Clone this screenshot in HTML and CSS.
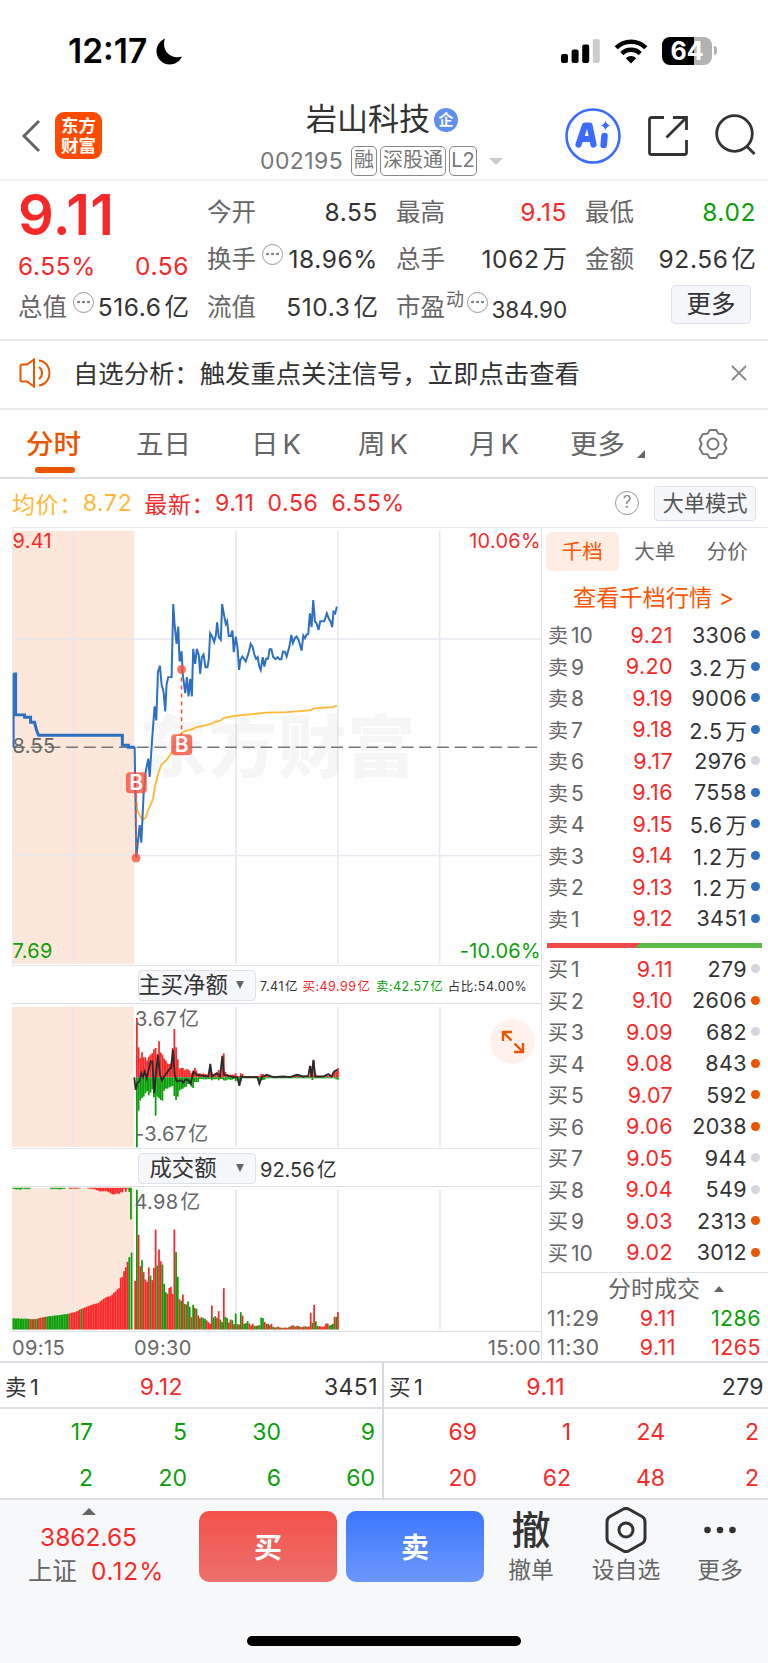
FILE: index.html
```html
<!DOCTYPE html>
<html lang="zh-CN">
  <head>
    <meta charset="UTF-8" />
    <meta name="viewport" content="width=device-width, initial-scale=1.0" />
    <title>岩山科技 002195</title>
    <link rel="stylesheet" href="styles.css">
  </head>
  <body>
    <div class="status-bar">
      <span class="clock">12:17</span>
      <svg class="moon" width="27" height="27" viewBox="0 0 27 27"><path d="M9 0.5C3.800 3 .5 7.500 .5 13.200c0 7.300 5.900 13.200 13.200 13.200 5.500 0 10.200-3.200 12.300-8-1.300.5-3 .8-4.600.8C13.900 19.200 8 13.500 8 6c0-2 .3-3.900 1-5.500z" /></svg>
      <div class="status-icons">
        <svg width="39" height="25" viewBox="0 0 39 25">
          <rect x="0" y="15" width="7" height="9" rx="2" /><rect x="10.600" y="10.500" width="7" height="13.500" rx="2" /><rect x="21.200" y="5.500" width="7" height="18.500" rx="2" /><rect x="31.800" y="0" width="7" height="24" rx="2" fill="#ccc" />
        </svg>
        <svg class="wifi" width="34" height="25" viewBox="0 0 34 25">
          <path d="M2.200 8.800a21 21 0 0 1 29.600 0M7.800 14.600a13 13 0 0 1 18.400 0" fill="none" stroke="#000" stroke-width="4.400" />
          <path d="M17 24.500l-5.200-5.300a7.400 7.400 0 0 1 10.400 0z" />
        </svg>
        <div class="battery">64</div>
      </div>
    </div>

    <div class="header">
      <svg class="back" width="20" height="34" viewBox="0 0 20 34"><path d="M18 2L3 17l15 15" /></svg>
      <div class="logo">东方<br>财富</div>
      <div class="stock">
        <div class="stock-name">岩山科技<span class="corp">企</span></div>
        <div class="stock-code"><span class="code">002195</span><span class="tag">融</span><span class="tag tag-wide">深股通</span><span class="tag tag-l2">L2</span><i class="caret"></i></div>
      </div>
      <div class="header-icons">
        <svg width="56" height="56" viewBox="0 0 56 56">
          <circle cx="28" cy="28" r="26.500" fill="none" stroke="#3b6bff" stroke-width="2.600" />
          <path d="M13.500 36.500L20 17.500h4.500L28.500 36.500M16 31h9.500" fill="none" stroke="#3b6bff" stroke-width="6.200" stroke-linejoin="round" stroke-linecap="round" />
          <path d="M39.500 28l-.8 9" fill="none" stroke="#3b6bff" stroke-width="6.600" stroke-linecap="round" />
          <path d="M40.500 12.500q.9 4.200 5 5-4.100.8-5 5-.9-4.200-5-5 4.100-.8 5-5z" fill="#3b6bff" />
        </svg>
        <svg class="share" width="40" height="40" viewBox="0 0 40 40"><path d="M16 1.500H3.500a2 2 0 0 0-2 2v33a2 2 0 0 0 2 2h33a2 2 0 0 0 2-2V24M25 1.500h13.500V14M38 2L18.500 21.500" /></svg>
        <svg class="search" width="42" height="42" viewBox="0 0 42 42"><circle cx="19.500" cy="19.500" r="17.800" /><path d="M31.500 32l8 8" /></svg>
      </div>
    </div>

    <div class="quote">
      <div class="price">9.11</div>
      <div class="cell r1 c2"><span>今开</span><b>8.55</b></div>
      <div class="cell r1 c3"><span>最高</span><b class="red">9.15</b></div>
      <div class="cell r1 c4"><span>最低</span><b class="green">8.02</b></div>
      <div class="cell r2 change"><b class="red">6.55%</b><b class="red">0.56</b></div>
      <div class="cell r2 c2"><span>换手<i class="dots"></i></span><b>18.96%</b></div>
      <div class="cell r2 c3"><span>总手</span><b>1062<u>万</u></b></div>
      <div class="cell r2 c4"><span>金额</span><b>92.56<u>亿</u></b></div>
      <div class="cell r3"><span>总值<i class="dots"></i></span><b>516.6<u>亿</u></b></div>
      <div class="cell r3 c2"><span>流值</span><b>510.3<u>亿</u></b></div>
      <div class="cell r3 c3 pe"><span>市盈<sup>动</sup><i class="dots"></i></span><b>384.90</b></div>
      <div class="cell r3 c4"><button class="btn-more">更多</button></div>
    </div>

    <div class="notice">
      <svg width="33" height="30" viewBox="0 0 33 30"><path d="M15 1.500v27L8 23.500H3a1.500 1.500 0 0 1-1.500-1.500V8A1.500 1.500 0 0 1 3 6.500h5z" /><path d="M20 9a7.500 7.500 0 0 1 0 12M20 2.500c14 2 14 23 0 25" /></svg>
      <span>自选分析：触发重点关注信号，立即点击查看</span>
      <svg class="close" width="16" height="16" viewBox="0 0 16 16"><path d="M1 1l14 14M15 1L1 15" /></svg>
    </div>

    <div class="tabs">
      <span class="active">分时</span><span>五日</span><span>日<em>K</em></span><span>周<em>K</em></span><span>月<em>K</em></span><span class="tab-more">更多</span>
      <svg width="32" height="32" viewBox="0 0 32 32"><path d="M12.800 2h6.400l2.300 3.700 4.600.2 3.300 5.600-2 4.500 2 4.500-3.300 5.600-4.600.2L19.200 30h-6.400l-2.300-3.700-4.600-.2-3.300-5.600 2-4.500-2-4.500 3.300-5.600 4.600-.2z" /><circle cx="16" cy="16" r="5.500" /></svg>
    </div>

    <div class="summary">
      <span class="yellow">均价：</span><span class="yellow avg">8.72</span>
      <span class="red">最新：</span><span class="red v1">9.11</span><span class="red v2">0.56</span><span class="red">6.55%</span>
      <i class="help">?</i><button>大单模式</button>
    </div>

    <div class="main">
      <div class="charts">
        <svg class="chart" width="530" height="438" viewBox="12 527.200 530 438">
          <rect x="12" y="530" width="122" height="434" fill="#fde6da" />
          <path class="grid" d="M73 530v434M236 530v434M338 530v434M440 530v434M12 638.500h530M12 855.500h530M12.500 528v438" />
          <text class="watermark" x="139" y="772">东方财富</text>
          <path d="M12.500 747H538" stroke="#777" stroke-width="1.500" stroke-dasharray="12 5.700" />
          <text x="12" y="547" class="t-red">9.41</text>
          <text x="541.500" y="547" class="t-red" text-anchor="end">10.06%</text>
          <text x="12" y="753">8.55</text>
          <text x="12" y="958.500" class="t-green">7.69</text>
          <text x="541.500" y="958.500" class="t-green" text-anchor="end">-10.06%</text>
          <g transform="translate(120 580) scale(.33333)">
            <polyline class="avg-line" points="45,610 48,650 51,690 60,710 68,720 76,712 84,688 92,672 98,655 104,620 110,595 116,572 124,553 140,538 150,523 158,512 168,475 184,458 200,451 215,447 230,440 266,433 285,425 302,420 310,413 330,409 362,404 400,401 440,397 500,395 560,391 572,389 582,384 610,382 640,380 651,376" />
            <polyline class="price-line" points="43,500 48,833 58,735 63,788 70,640 76,575 84,535 88,590 96,470 103,378 108,420 113,275 119,256 124,312 130,335 135,393 139,312 144,290 154,290 159,70 163,130 169,190 174,138 178,240 181,240 184,212 188,285 195,338 200,290 205,348 210,295 215,348 219,205 225,250 230,205 236,225 240,280 245,230 250,222 256,260 262,260 266,235 270,158 276,168 282,184 287,165 291,125 296,170 302,178 306,70 312,105 317,130 321,122 326,166 332,166 337,150 341,215 347,168 352,200 357,268 361,238 367,228 377,243 386,215 392,190 398,200 403,222 408,235 413,230 417,255 422,268 428,230 433,258 438,235 444,235 449,206 454,206 459,228 466,236 473,230 478,236 484,236 489,214 495,214 500,228 509,195 514,163 519,188 525,172 530,168 536,178 545,210 550,165 555,173 560,162 565,160 570,98 575,140 580,58 585,122 590,128 596,148 601,122 613,122 621,98 627,115 632,122 637,140 641,93 646,98 651,78" />
          </g>
          <path d="M13 673v74" stroke="#2d6fc0" stroke-width="2" />
          <path class="pre-line" d="M13 673.500h2v41h9v2.500h6v5h4l2 8 2 5h84v10h6v2h6.500" />
          <path class="mark-line" d="M135.700 794v64M181.300 669v66" />
          <circle class="mark" cx="135.700" cy="858" r="4.500" /><circle class="mark" cx="181.300" cy="669" r="4.500" />
          <rect class="mark" x="125.500" y="772" width="21" height="21" rx="4" /><rect class="mark" x="171" y="734" width="21" height="21" rx="4" />
          <text x="136" y="789.500" class="mark-b">B</text><text x="181.500" y="751.500" class="mark-b">B</text>
        </svg>

        <div class="pane-bar">
          <span class="select"><em>主买净额</em><i></i></span>
          <p class="flow-info">7.41<u>亿</u> <span class="red">买:49.99<u>亿</u></span> <span class="green">卖:42.57<u>亿</u></span> 占比:54.00%</p>
        </div>
        <div class="pane">
          <svg width="530" height="144" viewBox="12 1004.200 530 144">
            <rect x="12" y="1007" width="122" height="140" fill="#fde6da" />
            <path class="grid" d="M73 1007v140M236 1007v140M338 1007v140M440 1007v140" />
            <g id="flowBars"></g>
            <text x="135" y="1026.500">3.67<tspan dx="2">亿</tspan></text>
            <text x="135" y="1141">-3.67<tspan dx="2">亿</tspan></text>
            <g transform="translate(0 960) scale(.33333)">
              <polyline class="net-line" points="403,353 407,390 412,370 418,365 424,340 429,352 434,335 440,355 446,330 452,305 457,305 463,400 468,340 474,285 480,345 486,362 492,350 500,340 508,328 513,325 519,270 524,345 530,364 545,362 550,368 558,358 565,362 572,372 580,335 590,345 610,348 625,350 631,312 636,350 650,340 660,350 667,288 672,345 700,352 712,352 718,378 724,350 740,352 772,352 778,372 785,352 800,345 820,352 850,350 870,352 890,345 910,350 925,348 930,318 935,352 940,300 946,350 970,350 985,343 995,350 1003,335 1012,330" />
            </g>
          </svg>
          <div class="expand"><svg width="24" height="24" viewBox="0 0 24 24"><path d="M2 11V2h9M2 2l8.500 8.500M13.500 13.500L22 22M22 13v9h-9" /></svg></div>
        </div>
        <div class="pane-bar">
          <span class="select"><em>成交额</em><i></i></span>
          <p class="vol-info">92.56<u>亿</u></p>
        </div>
        <div class="pane">
          <svg width="530" height="144" viewBox="12 1187.200 530 144">
            <rect x="12" y="1188" width="122" height="142" fill="#fde6da" />
            <path class="grid" d="M73 1190v140M236 1190v140M338 1190v140M440 1190v140" />
            <g id="volBars"></g>
            <text x="134.500" y="1209">4.98<tspan dx="2">亿</tspan></text>
          </svg>
        </div>
        <div class="axis"><span>09:15</span><span class="open">09:30</span><span class="end">15:00</span></div>
      </div>

      <div class="book">
        <div class="book-tabs"><span class="on">千档</span><span>大单</span><span>分价</span></div>
        <div class="book-link">查看千档行情 <span>&gt;</span></div>
        <div id="asks"></div>
        <div class="ratio"><i></i></div>
        <div id="bids"></div>
        <div class="deals">
          <div class="deals-title">分时成交<i></i></div>
          <div class="deal"><span>11:29</span><b class="red">9.11</b><b class="green">1286</b></div>
          <div class="deal"><span>11:30</span><b class="red">9.11</b><b class="red">1265</b></div>
        </div>
      </div>
    </div>

    <div class="queues">
      <div class="queue">
        <div class="queue-head"><span>卖<u>1</u></span><b class="red">9.12</b><b>3451</b></div>
        <div class="queue-body green"><b>17</b><b>5</b><b>30</b><b>9</b><b>2</b><b>20</b><b>6</b><b>60</b></div>
      </div>
      <div class="queue buy">
        <div class="queue-head"><span>买<u>1</u></span><b class="red">9.11</b><b>279</b></div>
        <div class="queue-body red"><b>69</b><b>1</b><b>24</b><b>2</b><b>20</b><b>62</b><b>48</b><b>2</b></div>
      </div>
    </div>

    <div class="footer">
      <div class="index"><i></i><div class="red">3862.65</div><div>上证<span class="red">0.12%</span></div></div>
      <button class="trade trade-buy">买</button>
      <button class="trade trade-sell">卖</button>
      <div class="action"><strong>撤</strong><span>撤单</span></div>
      <div class="action act-fav"><svg width="42" height="46" viewBox="0 0 42 46"><path d="M18 2.300a6 6 0 0 1 6 0l13 7.200a6 6 0 0 1 3 5.200v16.600a6 6 0 0 1-3 5.200l-13 7.200a6 6 0 0 1-6 0L5 36.500a6 6 0 0 1-3-5.200V14.700a6 6 0 0 1 3-5.200z" /><circle cx="21" cy="23" r="7" /></svg><span>设自选</span></div>
      <div class="action act-more"><svg width="34" height="46" viewBox="0 0 34 46"><circle cx="4.500" cy="23" r="3.300" /><circle cx="17" cy="23" r="3.300" /><circle cx="29.500" cy="23" r="3.300" /></svg><span>更多</span></div>
      <div class="home-bar"></div>
    </div>

    <script>
      // dot: b = blue, g = grey, o = orange
      var asks = [
        ["10", "9.21", "3306", "b"], ["9", "9.20", "3.2万", "b"], ["8", "9.19", "9006", "b"],
        ["7", "9.18", "2.5万", "b"], ["6", "9.17", "2976", "g"], ["5", "9.16", "7558", "b"],
        ["4", "9.15", "5.6万", "b"], ["3", "9.14", "1.2万", "b"], ["2", "9.13", "1.2万", "b"],
        ["1", "9.12", "3451", "b"]
      ];
      var bids = [
        ["1", "9.11", "279", "g"], ["2", "9.10", "2606", "o"], ["3", "9.09", "682", "g"],
        ["4", "9.08", "843", "o"], ["5", "9.07", "592", "o"], ["6", "9.06", "2038", "o"],
        ["7", "9.05", "944", "g"], ["8", "9.04", "549", "g"], ["9", "9.03", "2313", "o"],
        ["10", "9.02", "3012", "o"]
      ];

      function renderBook(id, side, rows) {
        document.getElementById(id).innerHTML = rows.map(function (r) {
          return '<div class="level"><span>' + side + "<u>" + r[0] + '</u></span><b class="red">' + r[1] +
            "</b><b>" + r[2].replace("万", "<u>万</u>") + '</b><i class="dot-' + r[3] + '"></i></div>';
        }).join("");
      }
      renderBook("asks", "卖", asks);
      renderBook("bids", "买", bids);

      var RED = "#f92828";
      var GREEN = "#0a9f0a";
      var STEP = 1.704;

      function bar(x, y, h, color) {
        return '<rect x="' + x.toFixed(2) + '" y="' + y.toFixed(2) + '" width="1.75" height="' + h.toFixed(2) + '" fill="' + color + '"/>';
      }

      // volume per minute, negative = down minute
      var vol = [146, -419, 284, 190, -208, 172, 150, 143, 186, -162, 148, 185, 300, -192, 240, 205, -195, -137, -112, 107,
        125, 128, 107, 300, -232, -158, 91, -86, 105, -77, 75, -84, -68, 37, -74, 65, -62, 42, -34, 37,
        -34, -32, 27, 22, 17, 72, -36, -40, 35, 55, -30, -22, 124, -38, -34, 21, 30, -28, 16, -48,
        -16, 15, -52, 42, -17, -19, -25, 18, 12, 17, -11, -11, 12, -13, -36, -34, 23, 17, -17, 13,
        17, -8, 6, -7, 9, 6, -5, 5, 6, 5, -7, 9, 12, -12, 9, 11, -10, 8, 7, 9,
        -10, 8, 9, 50, -20, 74, -25, -11, 10, 9, 8, 10, 18, 18, -12, -14, -17, 38, -38, 52];
      // call auction, matched below and unmatched above
      var pre = [-34, -33, -33, -34, -32, -33, -32, -33, -32, -32, 31, 31, -31, 31, -32, 34, 35, 36, -37, 38,
        -39, -40, -40, -41, -42, -42, -43, -43, -44, -45, -46, -46, -47, 48, 50, 51, 52, 54, 56, 60,
        -62, 64, 66, 68, 70, 72, 74, 76, 77, 78, 80, 84, 88, 92, 95, 98, 99, 101, 104, 110,
        114, 120, 124, 155, 158, 175, 187, 203, -217, -231];
      var unmatched = [-3, -4, -5, -4, -6, -4, -2, -4, -3, -4, -2, 0, 0, 0, 0, 0, 0, 0, 0, 0,
        0, 0, -3, -4, -3, -4, -3, -5, -4, -3, -3, 0, 0, 3, 3, 2, 3, 3, 2, 2,
        0, 0, 0, 0, 2, 3, 3, 4, 5, 7, 9, 11, 10, 11, 10, 11, 13, 16, 19, 20,
        18, 17, 18, 13, 14, 3, 12, 3, -12, -95];

      var html = "";
      vol.forEach(function (v, i) {
        html += bar(134.3 + i * STEP, 1329.7 - Math.abs(v) / 3, Math.abs(v) / 3, v > 0 ? RED : GREEN);
      });
      pre.forEach(function (v, i) {
        html += bar(12.5 + i * STEP + (i > 68 ? 0.6 : 0), 1329.7 - Math.abs(v) / 3, Math.abs(v) / 3, v > 0 ? RED : GREEN);
      });
      unmatched.forEach(function (v, i) {
        html += bar(12.5 + i * STEP, 1188, Math.abs(v) / 3, v > 0 ? RED : GREEN);
      });
      document.getElementById("volBars").innerHTML = html;

      var buys = [0, 178, 90, 58, 75, 60, 60, 50, 62, 68, 72, 84, 88, 70, 108, 74, 68, 56, 50, 42,
        40, 42, 88, 145, 90, 54, 26, 28, 28, 22, 24, 24, 20, 12, 16, 28, 20, 12, 12, 10,
        12, 10, 9, 8, 38, 12, 10, 12, 14, 22, 10, 38, 72, 16, 10, 8, 8, 8, 8, 12];
      var sells = [0, 210, 100, 70, 62, 58, 48, 42, 54, 46, 36, 60, 115, 58, 62, 68, 70, 40, 34, 34,
        30, 28, 26, 56, 68, 58, 40, 36, 34, 30, 28, 20, 20, 28, 32, 14, 14, 14, 5, 5,
        6, 6, 6, 5, 5, 9, 6, 6, 5, 9, 5, 5, 9, 10, 7, 6, 8, 7, 5, 12, 7, 20, 12];
      var lateBuys = { 62: 12, 63: 10, 74: 10, 75: 10, 103: 34, 104: 8, 105: 50, 106: 8, 112: 9, 116: 14, 117: 20, 118: 18, 119: 28 };
      var lateSells = { 73: 20, 74: 9, 75: 8, 76: 7, 104: 8, 118: 6, 119: 7 };
      html = "";
      for (var i = 1; i < 120; i++) {
        var up = (buys[i] || lateBuys[i] || 4) / 3;
        var down = (sells[i] || lateSells[i] || 3) / 3;
        html += bar(134.3 + i * STEP, 1077.5 - up, up, RED) + bar(134.3 + i * STEP, 1077.5, down, GREEN);
      }
      document.getElementById("flowBars").innerHTML = html;
    </script>
  </body>
</html>
```

FILE: styles.css
```css
* {
  margin: 0;
  padding: 0;
  box-sizing: border-box;
}
body {
  width: 768px;
  height: 1663px;
  overflow: hidden;
  background-color: #fff;
  color: #333;
  font-family: Inter, "Noto Sans CJK SC", sans-serif;
  font-size: 23px;
}
b,
i,
em {
  font-weight: 400;
  font-style: normal;
}
u {
  text-decoration: none;
  margin-left: 3px;
  letter-spacing: 0;
}
button {
  border: 1px solid #dfe2e9;
  border-radius: 4px;
  background-color: #f6f7fa;
  font-family: inherit;
  color: #333;
}
.red {
  color: #f92828;
}
.green {
  color: #0a9f0a;
}
.yellow {
  color: #ffb936;
}

/* status bar */
.status-bar {
  display: flex;
  align-items: center;
  height: 102px;
  padding: 0 56px 0 68px;
}
.clock {
  width: 88px;
  font-size: 33.500px;
  font-weight: 600;
  letter-spacing: 0;
  color: #000;
}
.status-icons {
  display: flex;
  align-items: center;
  margin-left: auto;
}
.wifi {
  margin: 0 14px;
}
.battery {
  position: relative;
  width: 50px;
  height: 28px;
  border-radius: 8px;
  background: linear-gradient(to right, #000 64%, #b3b3b3 64%);
  color: #fff;
  font-size: 25px;
  font-weight: 700;
  line-height: 28px;
  text-align: center;
}
.battery::after {
  content: "";
  position: absolute;
  right: -5px;
  top: 9px;
  width: 3px;
  height: 9px;
  border-radius: 0 4px 4px 0;
  background-color: #b3b3b3;
}

/* header */
.header {
  display: flex;
  height: 79px;
  padding-left: 21px;
  border-bottom: 2px solid #f1f1f3;
}
.back {
  margin-top: 17px;
  fill: none;
  stroke: #666;
  stroke-width: 3;
}
.logo {
  width: 47px;
  height: 47px;
  margin: 10px 0 0 14px;
  padding-top: 4px;
  border-radius: 9px;
  background-color: #ff4a00;
  color: #fff;
  font-size: 17.500px;
  font-weight: 700;
  line-height: 20px;
  text-align: center;
}
.stock {
  width: 260px;
  margin-left: 158px;
}
.stock-name {
  display: flex;
  align-items: center;
  height: 37px;
  padding: 0 0 4px 46px;
  font-size: 31px;
  line-height: 30px;
}
.corp {
  width: 24px;
  height: 24px;
  margin: 2px 0 0 4px;
  border-radius: 50%;
  background-color: #5e8eee;
  color: #fff;
  font-size: 15px;
  font-weight: 700;
  line-height: 23px;
  text-align: center;
}
.stock-code {
  display: flex;
  align-items: center;
  height: 30px;
  margin-top: 7px;
  color: #777;
}
.code {
  width: 91px;
  letter-spacing: 0.4px;
}
.tag {
  width: 26px;
  height: 30px;
  margin-right: 3px;
  border: 1.5px solid #888;
  border-radius: 5px;
  font-size: 20px;
  line-height: 27px;
  text-align: center;
}
.tag-wide {
  width: 66px;
}
.tag-l2 {
  width: 28px;
}
.caret {
  margin-left: 9px;
  border: 7px solid transparent;
  border-top-color: #ccc;
  border-bottom: 0;
}
.header-icons {
  display: flex;
  margin: 6px 0 0 45px;
}
.share,
.search {
  fill: none;
  stroke: #333;
  stroke-width: 2.8;
}
.share {
  margin: 8px 0 0 27px;
}
.search {
  margin: 6px 0 0 27px;
}

/* quote */
.quote {
  display: grid;
  grid-template-columns: repeat(4, 169px);
  grid-template-rows: repeat(3, 47px);
  column-gap: 20px;
  height: 160px;
  padding: 8px 0 0 18px;
  border-bottom: 2px solid #ececef;
}
.price {
  color: #f92828;
  font-size: 56px;
  font-weight: 600;
  line-height: 53px;
  letter-spacing: 0.5px;
}
.cell {
  display: flex;
  align-items: center;
  justify-content: space-between;
  font-size: 24.500px;
  line-height: 47px;
  white-space: nowrap;
}
.cell span {
  position: relative;
  color: #666;
}
.cell b {
  margin-right: -2px;
  letter-spacing: 0.6px;
}
.change {
  padding-top: 14px;
}
.r3 {
  padding-top: 1px;
}
.dots {
  position: absolute;
  left: 55px;
  top: 8px;
  width: 21px;
  height: 21px;
  border: 1.5px solid #999;
  border-radius: 50%;
  background: radial-gradient(circle, #888 1.2px, transparent 1.6px) 2px 0 / 5px 18px repeat-x;
  background-clip: content-box;
  padding: 0 2px;
}
.pe sup {
  position: absolute;
  left: 50px;
  top: -8px;
  font-size: 18px;
}
.pe .dots {
  left: 71px;
}
.pe b {
  padding-top: 4px;
  font-size: 22.500px;
  letter-spacing: -0.1px;
}
.btn-more {
  width: 80px;
  height: 39px;
  margin: -5px 3px 0 auto;
  font-size: 24.500px;
  line-height: 37px;
}

/* notice */
.notice {
  display: flex;
  align-items: center;
  height: 69px;
  padding: 0 21px 3px 19px;
  border-bottom: 2px solid #ececef;
  font-size: 25.350px;
}
.notice span {
  margin: -2px 0 0 -1px;
}
.notice svg {
  margin-right: 22px;
  fill: none;
  stroke: #ec5500;
  stroke-width: 2;
}
.notice .close {
  margin: 0 0 0 auto;
  stroke: #888;
  stroke-width: 1.800;
}

/* period tabs */
.tabs {
  display: flex;
  align-items: center;
  height: 69px;
  padding-left: 26px;
  border-bottom: 2px solid #dcdde2;
  color: #666;
  font-size: 27.500px;
}
.tabs span {
  position: relative;
  width: 115px;
  line-height: 60px;
}
.tabs em {
  margin-left: 4px;
}
.tabs span:nth-child(1) {
  width: 110px;
}
.tabs span:nth-child(3) {
  width: 107px;
}
.tabs span:nth-child(4) {
  width: 111px;
}
.tabs span:nth-child(5) {
  width: 101px;
}
.tabs .active {
  color: #ec5500;
  font-weight: 500;
}
.tabs .active::after {
  content: "";
  position: absolute;
  left: 9px;
  bottom: 1px;
  width: 40px;
  height: 6px;
  border-radius: 3px;
  background-color: #ec5500;
}
.tabs .tab-more {
  width: 127px;
}
.tab-more::after {
  content: "";
  position: absolute;
  left: 67px;
  top: 36px;
  border-left: 8px solid transparent;
  border-bottom: 8px solid #666;
}
.tabs svg {
  fill: none;
  stroke: #777;
  stroke-width: 2;
  stroke-linejoin: round;
}

/* average / last */
.summary {
  display: flex;
  align-items: center;
  height: 48px;
  padding: 0 12px 0 12px;
  color: #666;
}
.summary span {
  letter-spacing: 0.6px;
}
.summary .avg {
  margin-right: 12px;
}
.summary .v1,
.summary .v2 {
  margin-right: 13px;
}
.help {
  width: 24px;
  height: 24px;
  margin: 0 15px 0 auto;
  border: 1.500px solid #999;
  border-radius: 50%;
  color: #888;
  font-size: 17px;
  line-height: 21px;
  text-align: center;
}
.summary button {
  width: 102px;
  height: 35px;
  color: #555;
  font-size: 21.300px;
  line-height: 32px;
}

/* charts */
.main {
  display: flex;
  height: 836px;
  border-bottom: 2px solid #dcdde4;
}
.charts {
  width: 542px;
  padding-left: 12px;
  border-right: 1.500px solid #e3e5eb;
}
.charts svg {
  display: block;
}
.charts text {
  fill: #666;
  font-size: 20px;
  letter-spacing: 0.3px;
}
.chart {
  border-top: 1.500px solid #e6e8ee;
}
.grid {
  stroke: #e6e9ef;
  stroke-width: 1.600;
}
.charts .watermark {
  fill: #000;
  fill-opacity: 0.035;
  font-size: 68px;
  font-weight: 900;
  letter-spacing: 1.500px;
}
.charts .t-red {
  fill: #f92828;
}
.charts .t-green {
  fill: #0a9f0a;
}
.avg-line,
.price-line,
.net-line {
  fill: none;
  stroke: #ffb936;
  stroke-width: 5.500;
}
.price-line {
  stroke: #2d6fc0;
  stroke-width: 6;
}
.net-line {
  stroke: #2b2b2b;
}
.pre-line {
  fill: none;
  stroke: #2d6fc0;
  stroke-width: 3;
}
.mark {
  fill: #f9503f;
  fill-opacity: 0.8;
}
.mark-line {
  stroke: #f9503f;
  stroke-width: 1.600;
  stroke-dasharray: 4 4;
}
.charts .mark-b {
  fill: #fff;
  font-size: 21px;
  font-weight: 600;
  text-anchor: middle;
}
.pane-bar {
  display: flex;
  align-items: center;
  height: 39px;
  padding: 1px 0 0 126px;
  border-top: 1.500px solid #e6e8ee;
  border-bottom: 1.500px solid #dcdfe6;
}
.select {
  display: flex;
  align-items: center;
  width: 118px;
  height: 31px;
  border: 1px solid #dfe2e9;
  border-radius: 4px;
  background-color: #f6f7fa;
  font-size: 22.400px;
  line-height: 28px;
}
.select em {
  width: 90px;
  margin: -1px 0 0 -1px;
  text-align: center;
}
.select i {
  margin-left: 8px;
  border: 4.500px solid transparent;
  border-top: 8px solid #666;
  border-bottom: 0;
}
.flow-info {
  margin-left: 4px;
  font-size: 12.500px;
  letter-spacing: 0.480px;
  white-space: nowrap;
}
.flow-info u {
  margin-left: 1px;
}
.flow-info span {
  margin: 0 1px;
}
.vol-info {
  margin-left: 4px;
  font-size: 20px;
}
.vol-info u {
  margin-left: 2px;
}
.pane {
  position: relative;
  height: 144px;
}
.expand {
  position: absolute;
  right: 6px;
  top: 15px;
  width: 45px;
  height: 45px;
  padding: 10.500px;
  border-radius: 50%;
  background-color: #fff1eb;
}
.expand path {
  fill: none;
  stroke: #ec5500;
  stroke-width: 2.400;
}
.axis {
  display: flex;
  height: 30px;
  border-top: 1.500px solid #dcdfe6;
  color: #666;
  font-size: 20px;
  letter-spacing: 0.400px;
  line-height: 32px;
}
.axis .open {
  margin-left: 69px;
}
.axis .end {
  margin-left: auto;
}

/* order book */
.book {
  width: 226px;
  border-top: 1px solid #e6e8ee;
}
.book-tabs {
  display: flex;
  height: 43px;
  padding: 4px 0 0 4px;
  color: #666;
  font-size: 20.500px;
  line-height: 39px;
  text-align: center;
}
.book-tabs span {
  width: 72.500px;
  height: 39px;
  border-radius: 6px;
}
.book-tabs .on {
  background-color: #ffede4;
  color: #ff5500;
}
.book-link {
  height: 48px;
  padding: 10px 0 0 31px;
  color: #ff5500;
  font-size: 23.200px;
  line-height: 34px;
}
.level {
  display: flex;
  align-items: center;
  height: 31.500px;
  padding: 0 8px 0 6px;
  font-size: 21.500px;
}
.level span {
  width: 54px;
  color: #666;
  font-size: 20px;
}
.level span u {
  font-size: 21px;
}
.level b {
  width: 75px;
  letter-spacing: 0.400px;
  text-align: right;
}
.level span + b {
  width: 71px;
  margin-right: -1px;
}
.level i {
  width: 9px;
  height: 9px;
  margin-left: 4px;
  border-radius: 50%;
}
.dot-b {
  background-color: #2d6fc0;
}
.dot-g {
  background-color: #d3d6dd;
}
.dot-o {
  background-color: #ec5500;
}
.ratio {
  height: 5px;
  margin: 9px 6px 5px 5px;
  background-color: #5bbb45;
}
.ratio i {
  display: block;
  width: 93px;
  height: 5px;
  background-color: #ee4a4a;
  clip-path: polygon(0 0, 100% 0, calc(100% - 5px) 100%, 0 100%);
}
.deals {
  margin-top: 4px;
  border-top: 1.500px solid #dcdfe6;
  color: #666;
}
.deals-title {
  display: flex;
  align-items: center;
  height: 31px;
  padding-left: 66px;
  font-size: 23px;
  line-height: 28px;
}
.deals-title i {
  margin-left: 14px;
  border: 5px solid transparent;
  border-top: 0;
  border-bottom: 6px solid #666;
}
.deal {
  display: flex;
  height: 29px;
  padding: 0 7px 0 5px;
  font-size: 21.500px;
  letter-spacing: 0.400px;
  line-height: 28px;
}
.deal span {
  width: 54px;
}
.deal b {
  width: 75px;
  text-align: right;
}
.deal b:last-child {
  width: 85px;
}

/* queues */
.queues {
  display: flex;
  height: 137px;
  border-bottom: 2px solid #dcdde4;
}
.queue {
  width: 384px;
  border-right: 2px solid #d6d8e0;
}
.queue.buy {
  border-right: 0;
}
.queue-head {
  display: flex;
  height: 46px;
  padding: 0 4px 0 5px;
  border-bottom: 2px solid #dcdde4;
  font-size: 23px;
  letter-spacing: 0.400px;
  line-height: 49px;
}
.queue-head span {
  width: 60px;
  font-size: 21.500px;
}
.queue-head b {
  width: 118px;
  text-align: right;
}
.buy .queue-head b {
  width: 116px;
}
.queue-head b:last-child {
  width: 75px;
  margin-left: auto;
}
.queue-body {
  display: grid;
  grid-template-columns: repeat(4, 94px);
  margin-left: -1px;
  font-size: 23px;
  line-height: 46px;
  text-align: right;
}

/* footer */
.footer {
  position: relative;
  display: flex;
  height: 164px;
  padding-top: 12px;
  background-color: #f7f8fa;
}
.index {
  width: 177px;
  margin: -1px 22px 0 0;
  color: #666;
  font-size: 24.500px;
  line-height: 34px;
  text-align: center;
  white-space: nowrap;
}
.index i {
  display: block;
  width: 14px;
  margin: -3px auto 5px;
  border: 7px solid transparent;
  border-top: 0;
  border-bottom-color: #666;
}
.index span {
  margin-left: 14px;
  letter-spacing: 0.900px;
}
.index > div + div {
  padding-left: 15px;
}
.trade {
  width: 138px;
  height: 71px;
  margin: -1px 9px 0 0;
  padding-bottom: 2px;
  border: 0;
  border-radius: 10px;
  color: #fff;
  font-size: 28px;
  font-weight: 600;
}
.trade-buy {
  background: linear-gradient(#f4514a, #eb706c);
}
.trade-sell {
  background: linear-gradient(#3c77fb, #6c98fd);
}
.action {
  display: flex;
  flex-direction: column;
  align-items: center;
  width: 76px;
  color: #666;
  font-size: 22.800px;
  line-height: 32px;
}
.action strong {
  height: 42px;
  color: #333;
  font-size: 39px;
  font-weight: 500;
  line-height: 35px;
}
.action svg {
  margin-top: -5px;
}
.action svg + span {
  margin-top: 1px;
}
.act-fav {
  width: 114px;
}
.act-fav svg {
  fill: none;
  stroke: #333;
  stroke-width: 3;
}
.act-more {
  width: 74px;
}
.act-more svg {
  fill: #333;
}
.home-bar {
  position: absolute;
  left: 247px;
  top: 136px;
  width: 274px;
  height: 10px;
  border-radius: 5px;
  background-color: #000;
}
```
